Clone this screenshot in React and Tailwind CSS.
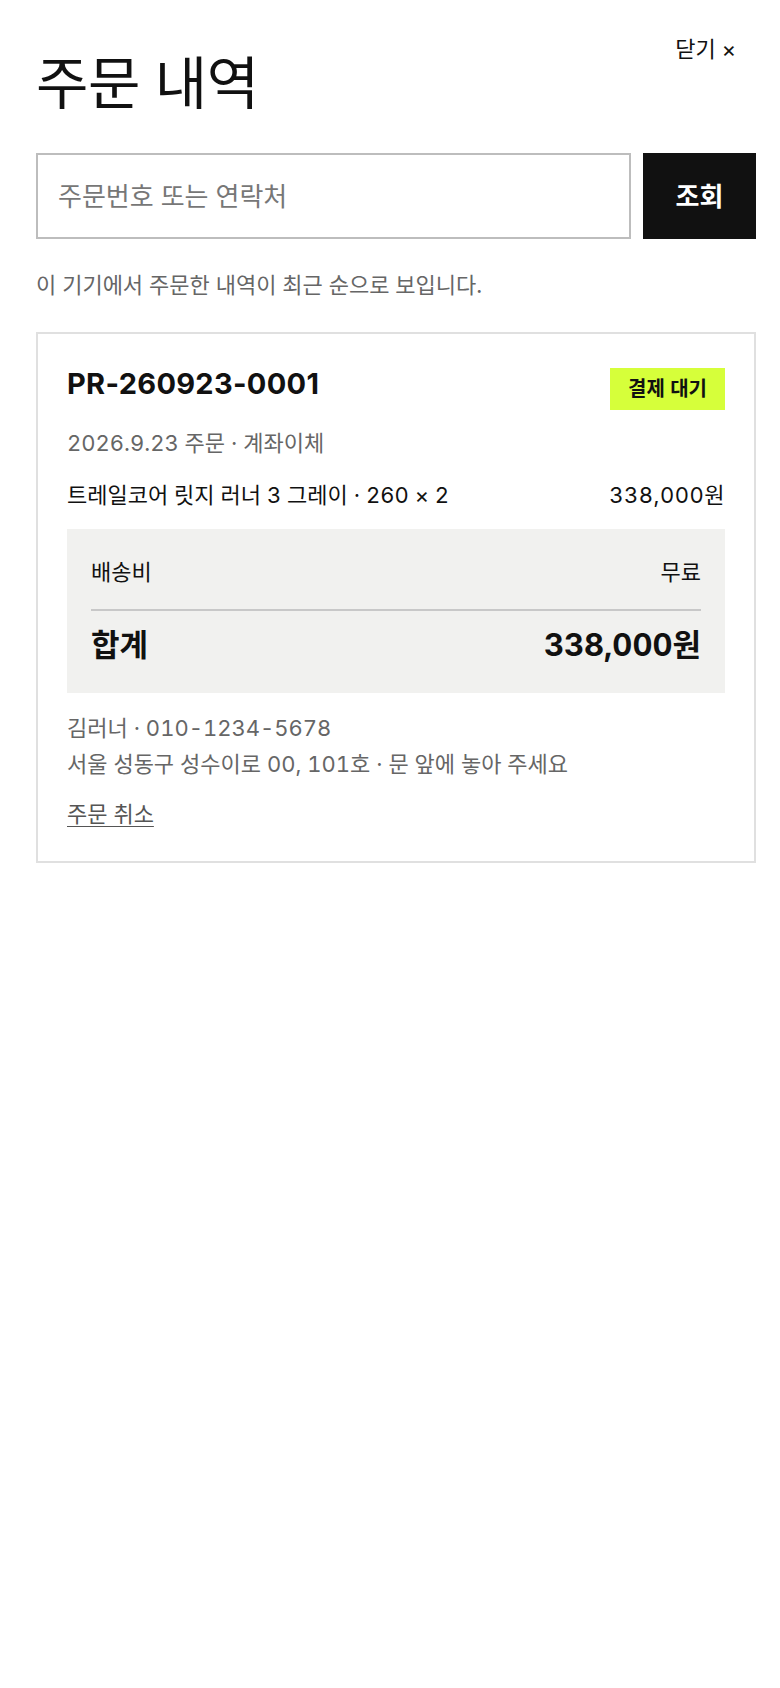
export default function App() {
  const font = { fontFamily: "Inter, 'Noto Sans CJK KR', 'Noto Sans', sans-serif" };
  return (
    <div className="min-h-screen bg-white pl-9 pr-[24px] pt-[30px] text-[#111] tabular-nums" style={font}>
      <div className="flex justify-between items-start">
        <h1 className="text-[57px] leading-[66px] mt-[21px] font-normal tracking-[-0.5px]">주문 내역</h1>
        <button className="text-[22px] leading-[30px] mt-[4px] mr-[20px] text-[#111]">닫기 ×</button>
      </div>

      <div className="flex gap-3 mt-[36px]">
        <div className="flex-1 h-[86px] border-2 border-[#bdbdbd] flex items-center px-[20px]">
          <span className="text-[26px] text-[#777]">주문번호 또는 연락처</span>
        </div>
        <button className="w-[113px] h-[86px] bg-[#111] text-white text-[26px] font-bold">조회</button>
      </div>

      <p className="mt-[31px] text-[22px] leading-[30px] text-[#666]">이 기기에서 주문한 내역이 최근 순으로 보입니다.</p>

      <div className="mt-[32px] border-2 border-[#e0e0e0] px-[29px] pt-[32px] pb-[32px]">
        <div className="flex justify-between items-start">
          <div className="text-[29px] leading-[36px] font-bold tracking-[0.3px] proportional-nums">PR-260923-0001</div>
          <div className="mt-[2px] h-[42px] px-[18px] bg-[#d6ff3a] flex items-center text-[20px] font-bold">결제 대기</div>
        </div>
        <div className="mt-[18px] text-[22px] leading-[30px] text-[#666]">2026.9.23 주문 · 계좌이체</div>
        <div className="mt-[22px] flex justify-between text-[22px] leading-[30px] text-[#111]">
          <span>트레일코어 릿지 러너 3 그레이 · 260 × 2</span>
          <span className="tracking-[0.5px]">338,000원</span>
        </div>

        <div className="mt-[19px] bg-[#f1f1ef] px-6 pt-[28px] pb-[28px]">
          <div className="flex justify-between text-[22px] leading-[30px]">
            <span>배송비</span>
            <span>무료</span>
          </div>
          <div className="mt-[22px] h-[2px] bg-[#c8c8c8]"></div>
          <div className="mt-[14px] flex justify-between text-[31px] leading-[40px] font-bold">
            <span>합계</span>
            <span>338,000원</span>
          </div>
        </div>

        <div className="mt-[17px] text-[22px] leading-[36px] text-[#666]">
          <div>김러너 · 010-1234-5678</div>
          <div>서울 성동구 성수이로 00, 101호 · 문 앞에 놓아 주세요</div>
        </div>
        <div className="mt-[17px] text-[22px] leading-[30px]">
          <a className="text-[#555] underline underline-offset-4 decoration-1">주문 취소</a>
        </div>
      </div>
    </div>
  );
}
